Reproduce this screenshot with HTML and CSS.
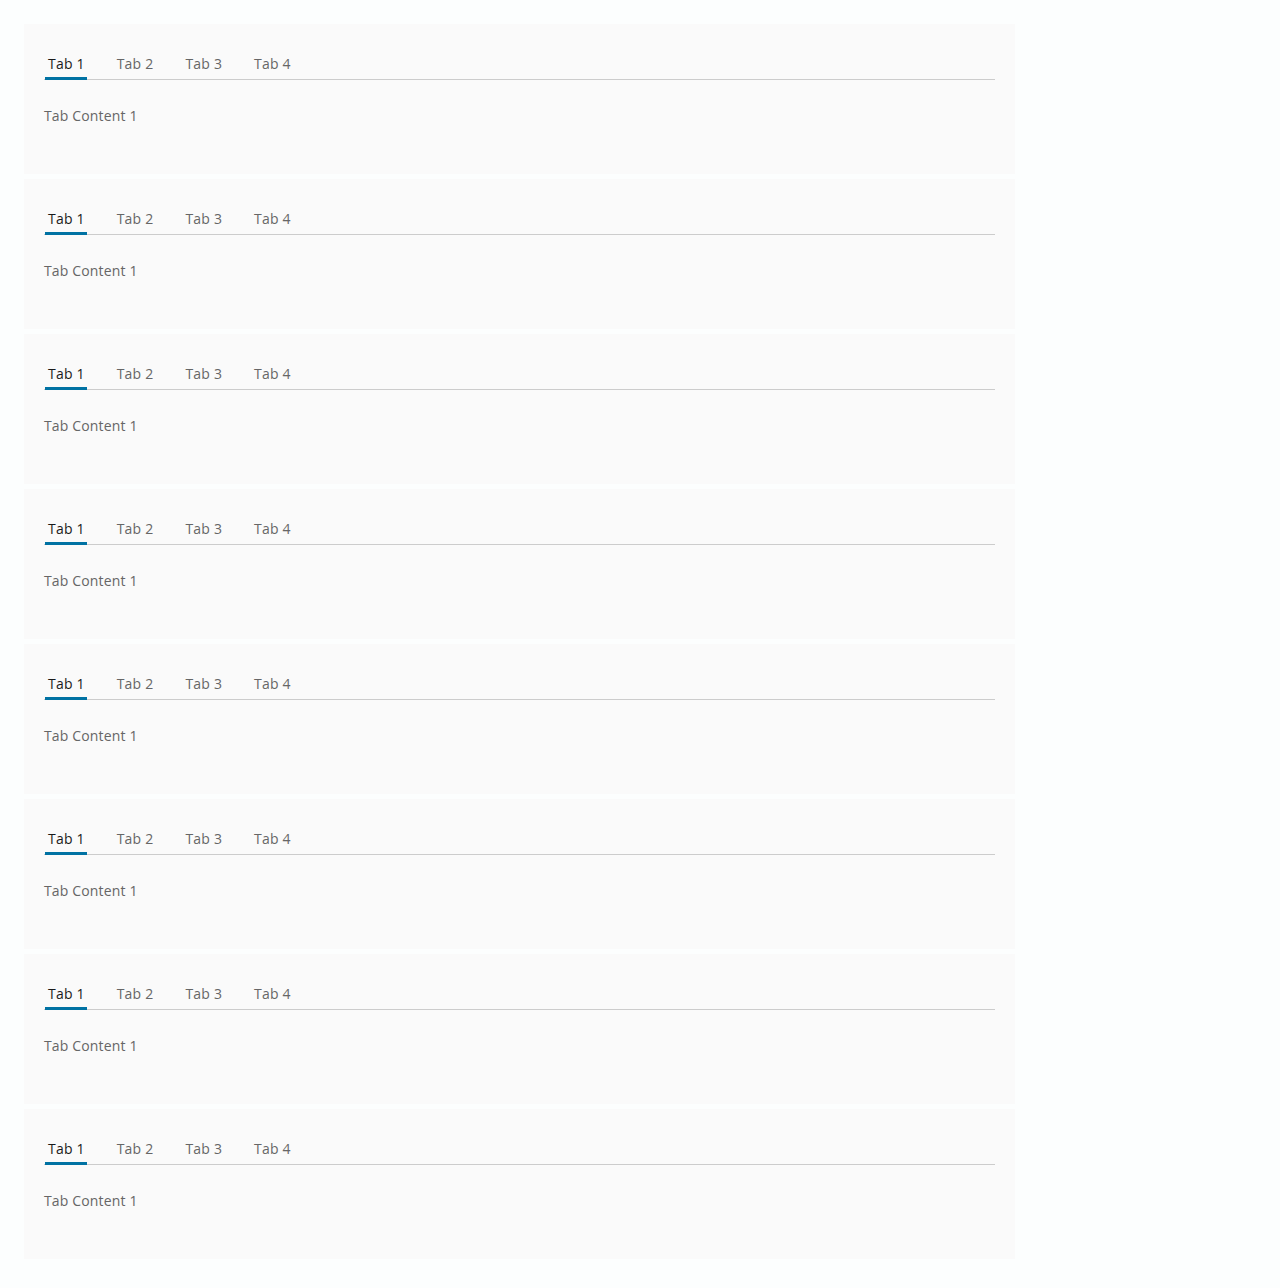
FILE: index.html
```html
<!DOCTYPE html>
<html lang="en">
<head>
<meta charset="utf-8">
<title>Tabs</title>
<link rel="stylesheet" href="styles.css">
</head>
<body>
<main class="stack">
  <section class="card">
    <nav class="tabs"><button class="tab active">Tab 1</button><button class="tab">Tab 2</button><button class="tab">Tab 3</button><button class="tab">Tab 4</button></nav>
    <div class="content">Tab Content 1</div>
  </section>
  <section class="card">
    <nav class="tabs"><button class="tab active">Tab 1</button><button class="tab">Tab 2</button><button class="tab">Tab 3</button><button class="tab">Tab 4</button></nav>
    <div class="content">Tab Content 1</div>
  </section>
  <section class="card">
    <nav class="tabs"><button class="tab active">Tab 1</button><button class="tab">Tab 2</button><button class="tab">Tab 3</button><button class="tab">Tab 4</button></nav>
    <div class="content">Tab Content 1</div>
  </section>
  <section class="card">
    <nav class="tabs"><button class="tab active">Tab 1</button><button class="tab">Tab 2</button><button class="tab">Tab 3</button><button class="tab">Tab 4</button></nav>
    <div class="content">Tab Content 1</div>
  </section>
  <section class="card">
    <nav class="tabs"><button class="tab active">Tab 1</button><button class="tab">Tab 2</button><button class="tab">Tab 3</button><button class="tab">Tab 4</button></nav>
    <div class="content">Tab Content 1</div>
  </section>
  <section class="card">
    <nav class="tabs"><button class="tab active">Tab 1</button><button class="tab">Tab 2</button><button class="tab">Tab 3</button><button class="tab">Tab 4</button></nav>
    <div class="content">Tab Content 1</div>
  </section>
  <section class="card">
    <nav class="tabs"><button class="tab active">Tab 1</button><button class="tab">Tab 2</button><button class="tab">Tab 3</button><button class="tab">Tab 4</button></nav>
    <div class="content">Tab Content 1</div>
  </section>
  <section class="card">
    <nav class="tabs"><button class="tab active">Tab 1</button><button class="tab">Tab 2</button><button class="tab">Tab 3</button><button class="tab">Tab 4</button></nav>
    <div class="content">Tab Content 1</div>
  </section>
</main>
</body>
</html>
```

FILE: styles.css
```css
html, body {
  margin: 0;
  padding: 0;
  background: #fcfefe;
}
body {
  font-family: "Open Sans", "Noto Sans", sans-serif;
  font-size: 14px;
  color: #666;
}
.stack {
  display: flex;
  flex-direction: column;
  gap: 5px;
  width: 991px;
  padding: 24px;
}
.card {
  background: #fafafa;
  height: 150px;
  box-sizing: border-box;
  padding: 20px 20px 0;
}
.tabs {
  display: flex;
  gap: 27px;
  height: 36px;
  padding-left: 1px;
  box-shadow: inset 0 -1px 0 #cccccc;
}
.tab {
  font: inherit;
  font-size: 14px;
  letter-spacing: 0.2px;
  color: #666;
  background: none;
  border: 0;
  margin: 0;
  padding: 4px 2px 0 3px;
  height: 36px;
  line-height: 20px;
  cursor: pointer;
}
.tab.active {
  color: #1a1a1a;
  box-shadow: inset 0 -3px 0 #0072a3;
}
.content {
  padding-top: 24px;
  line-height: 24px;
  letter-spacing: 0.15px;
}
```
